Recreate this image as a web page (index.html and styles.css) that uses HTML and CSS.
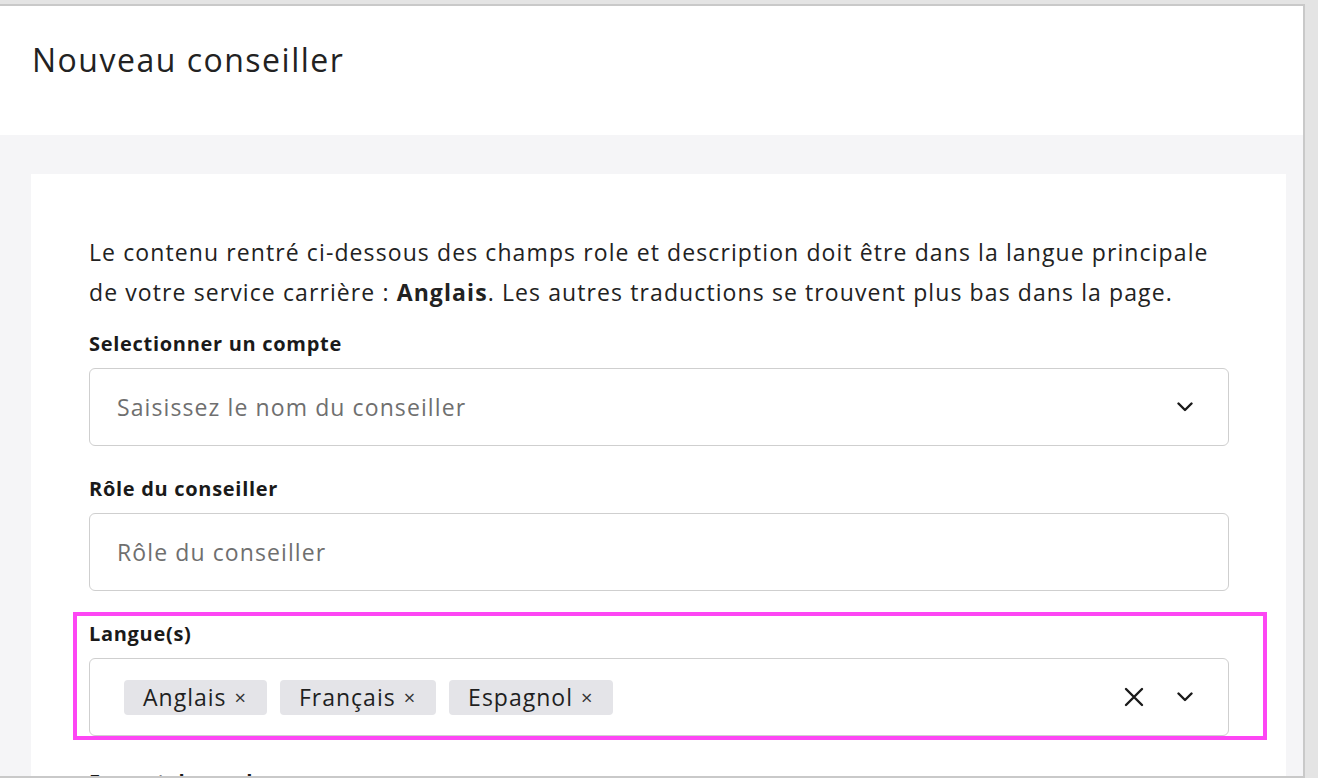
FILE: index.html
```html
<!DOCTYPE html>
<html lang="fr">
<head>
  <meta charset="UTF-8">
  <meta name="viewport" content="width=device-width, initial-scale=1.0">
  <title>Nouveau conseiller</title>
  <link rel="stylesheet" href="styles.css">
</head>
<body>
  <div class="frame">
    <header class="page-header">
      <h1>Nouveau conseiller</h1>
    </header>
    <main class="page-body">
      <div class="card">
        <p class="intro">Le contenu rentré ci-dessous des champs role et description doit être dans la langue principale de votre service carrière : <strong>Anglais</strong>. Les autres traductions se trouvent plus bas dans la page.</p>

        <div class="field">
          <label class="field-label">Selectionner un compte</label>
          <div class="control">
            <span class="placeholder">Saisissez le nom du conseiller</span>
            <span class="indicators">
              <svg class="chevron" width="16" height="10" viewBox="0 0 16 10"><path d="M1.5 1.5 L8 8 L14.5 1.5" fill="none" stroke="#1a1a1a" stroke-width="2.4" stroke-linecap="round" stroke-linejoin="round"/></svg>
            </span>
          </div>
        </div>

        <div class="field">
          <label class="field-label">Rôle du conseiller</label>
          <div class="control">
            <span class="placeholder">Rôle du conseiller</span>
          </div>
        </div>

        <div class="field highlight">
          <label class="field-label">Langue(s)</label>
          <div class="control multi">
            <div class="tags">
              <span class="tag">Anglais <span class="tag-x">×</span></span>
              <span class="tag">Français <span class="tag-x">×</span></span>
              <span class="tag">Espagnol <span class="tag-x">×</span></span>
            </div>
            <span class="indicators">
              <svg class="clear" width="20" height="20" viewBox="0 0 20 20"><path d="M2 2 L18 18 M18 2 L2 18" fill="none" stroke="#1a1a1a" stroke-width="2.4" stroke-linecap="round"/></svg>
              <svg class="chevron" width="16" height="10" viewBox="0 0 16 10"><path d="M1.5 1.5 L8 8 L14.5 1.5" fill="none" stroke="#1a1a1a" stroke-width="2.4" stroke-linecap="round" stroke-linejoin="round"/></svg>
            </span>
          </div>
        </div>

        <div class="field">
          <label class="field-label">Format de rendez-vous</label>
        </div>
      </div>
    </main>
  </div>
</body>
</html>
```

FILE: styles.css
```css
body {
  margin: 0;
  background: #e4e4e4;
  font-family: 'Open Sans', 'Liberation Sans', sans-serif;
  color: #1f1f1f;
  height: 778px;
  overflow: hidden;
}
.frame {
  margin-top: 4px;
  width: 1303px;
  height: 770px;
  border-top: 2px solid #c9c9c9;
  border-right: 2px solid #c9c9c9;
  border-bottom: 2px solid #c9c9c9;
  overflow: hidden;
  background: #f5f5f7;
}
.page-header {
  background: #ffffff;
  height: 129px;
  padding-left: 32px;
  display: flex;
  align-items: flex-start;
}
.page-header h1 {
  margin: 34px 0 0 0;
  font-size: 32px;
  font-weight: 400;
  line-height: 40px;
  color: #222222;
  letter-spacing: 1.5px;
}
.page-body {
  padding: 39px 17px 0 31px;
}
.card {
  background: #ffffff;
  padding: 58px 57px 40px 58px;
}
.intro {
  margin: 0;
  font-size: 23px;
  line-height: 40px;
  color: #222222;
  letter-spacing: 1.1px;
}
.intro strong {
  font-weight: 700;
}
.field {
  margin-top: 18px;
}
.field + .field {
  margin-top: 29px;
}
.field-label {
  display: block;
  font-size: 20px;
  font-weight: 700;
  line-height: 28px;
  color: #1a1a1a;
  margin-bottom: 10px;
  letter-spacing: 0.7px;
}
.control {
  height: 76px;
  border: 1px solid #cfcfcf;
  border-radius: 6px;
  display: flex;
  align-items: center;
  padding: 0 35px 0 27px;
}
.placeholder {
  flex: 1;
  font-size: 23px;
  color: #6f6f6f;
  letter-spacing: 1.1px;
}
.indicators {
  display: flex;
  align-items: center;
  gap: 33px;
}
.field.highlight {
  margin: 21px -38px 0 -16px;
  padding: 4px 34px 0 12px;
  border: 4px solid #fd46f4;
}
.field.highlight + .field {
  margin-top: 28px;
}
.multi {
  padding-left: 34px;
}
.tags {
  flex: 1;
  display: flex;
  gap: 13px;
}
.tag {
  background: #e4e4e8;
  border-radius: 4px;
  height: 35px;
  padding: 0 20px 0 19px;
  display: flex;
  align-items: center;
  font-size: 23px;
  color: #1f1f1f;
  letter-spacing: 1px;
}
.tag-x {
  font-size: 20px;
  margin-left: 8px;
  color: #333333;
}
```
